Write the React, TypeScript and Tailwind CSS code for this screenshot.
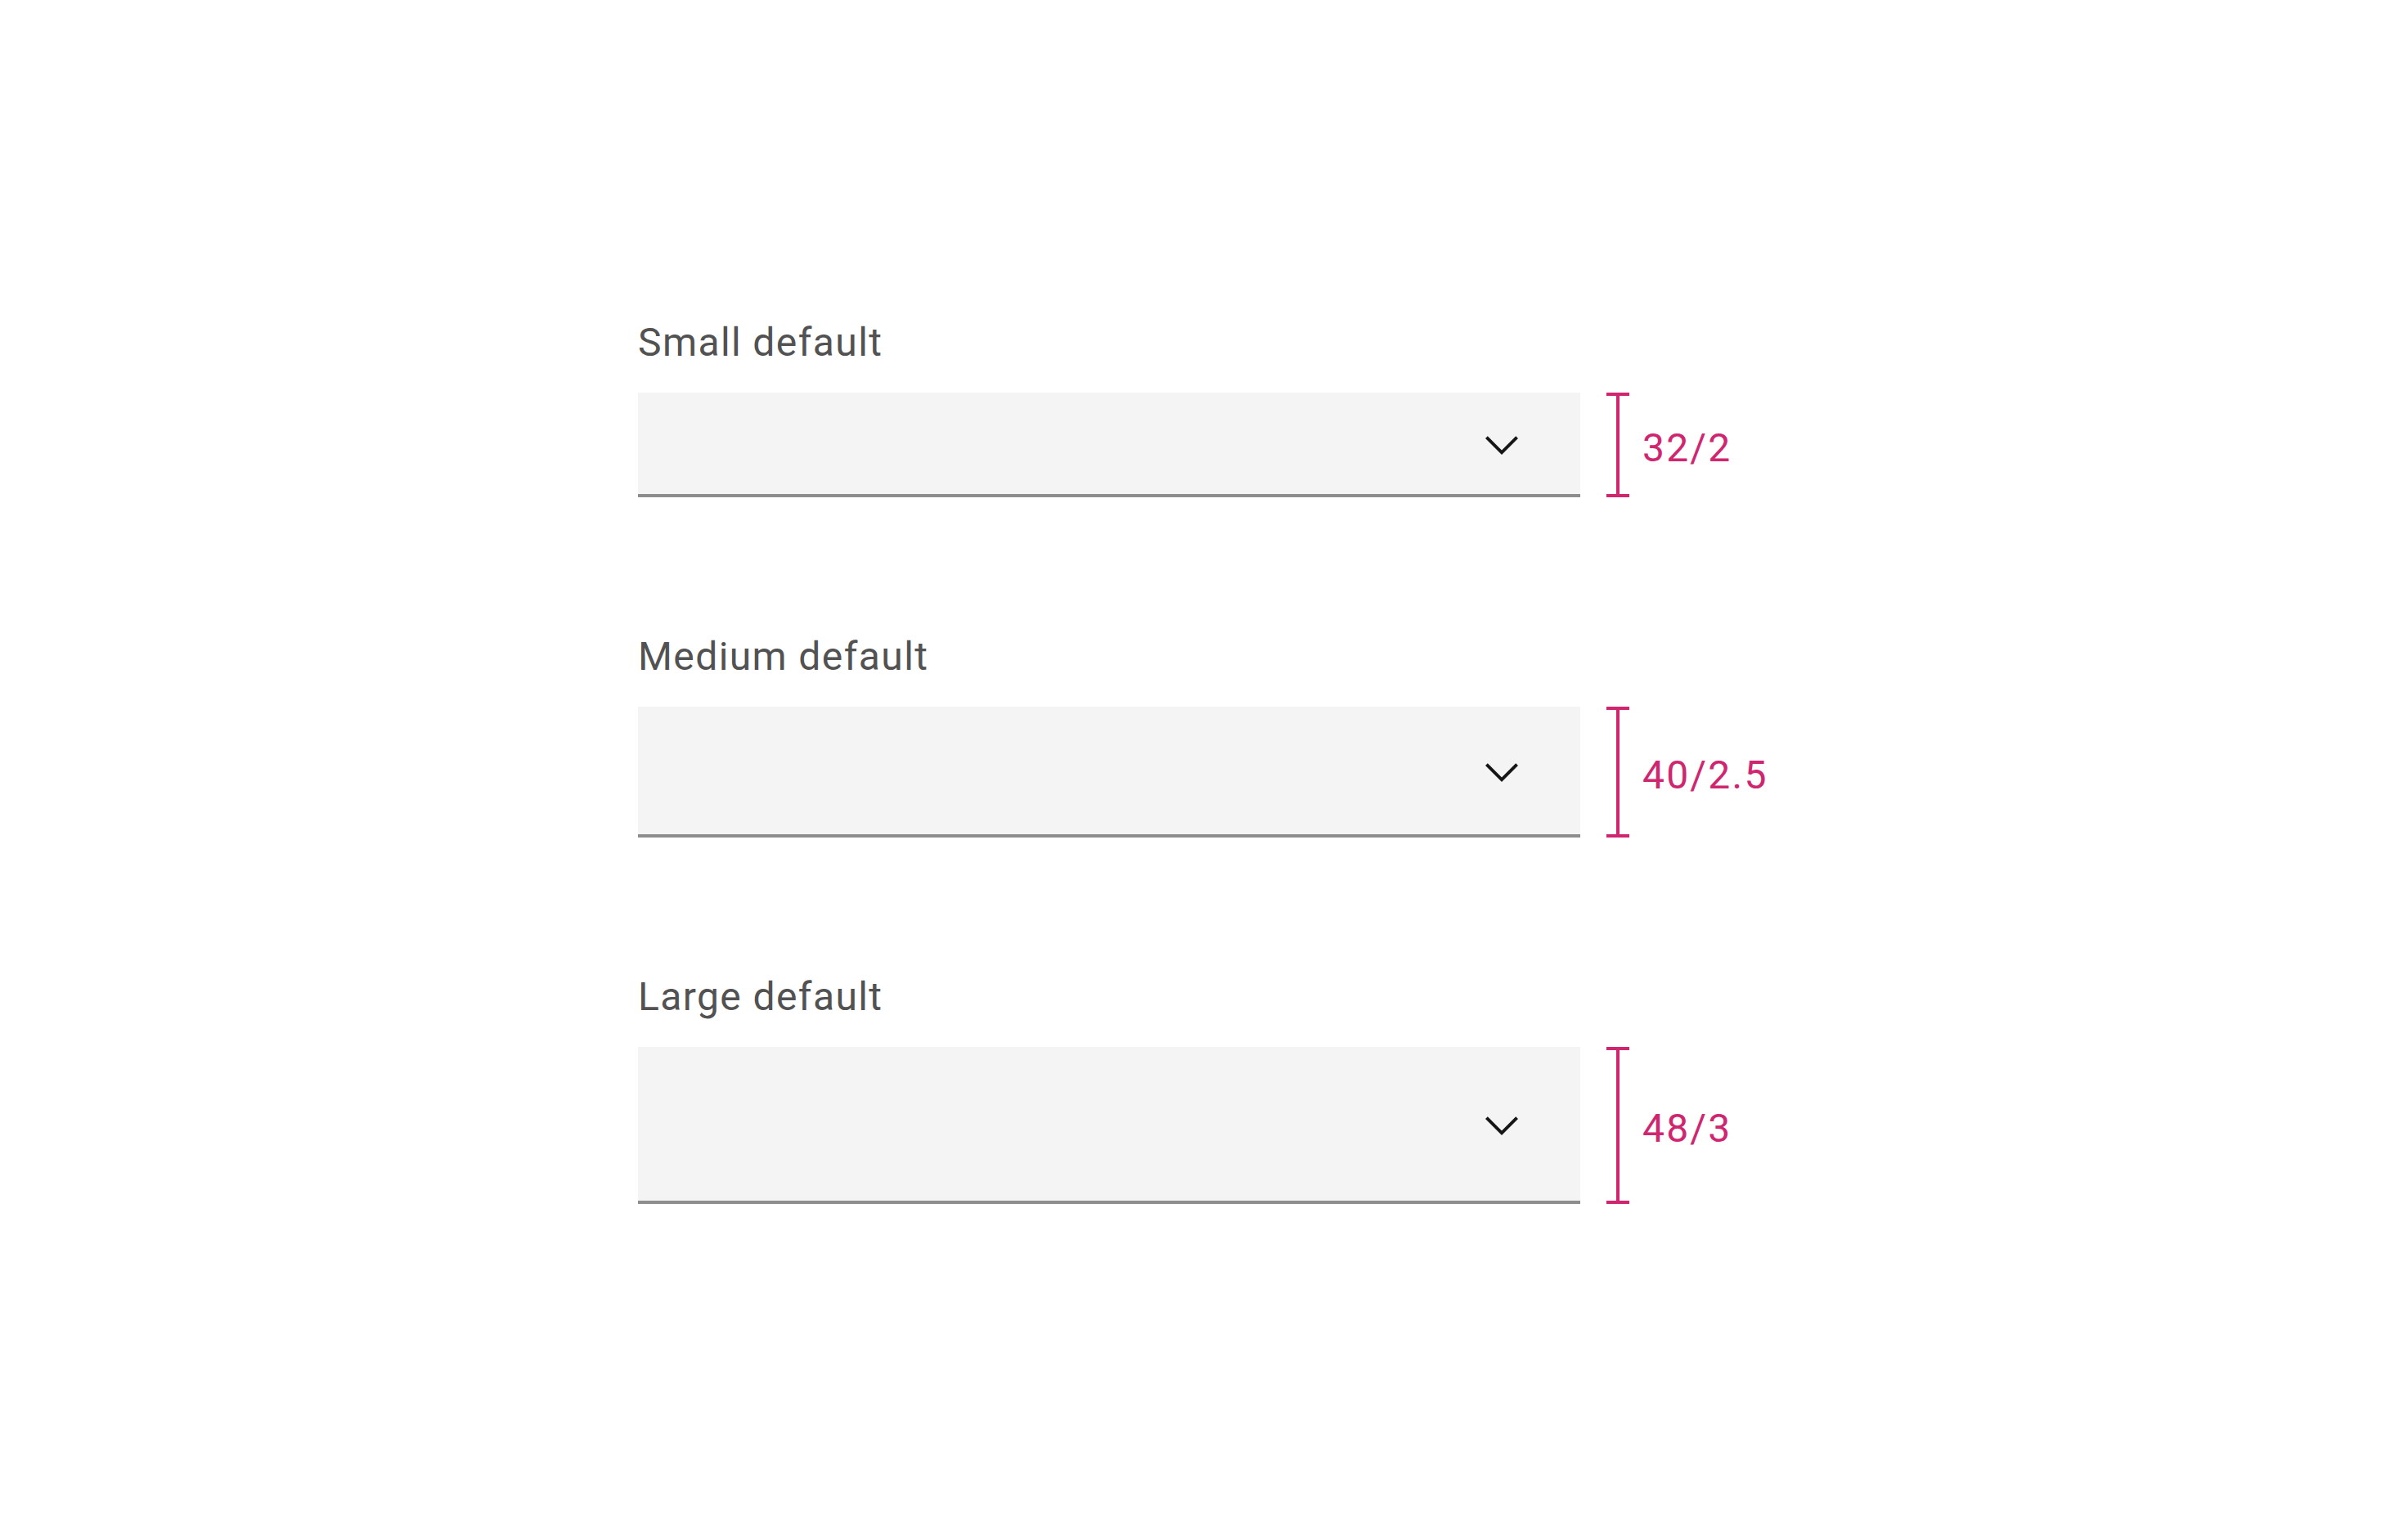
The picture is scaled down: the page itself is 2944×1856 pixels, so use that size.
import React from "react";

const Chevron = () => (
  <svg width="64" height="64" viewBox="0 0 16 16" fill="#161616" aria-hidden="true">
    <path d="M8 11L3 6 3.7 5.3 8 9.6 12.3 5.3 13 6z" />
  </svg>
);

type Row = { label: string; h: string; bracketH: string; measure: string };

const rows: Row[] = [
  { label: "Small default", h: "h-[128px]", bracketH: "h-[128px]", measure: "32/2" },
  { label: "Medium default", h: "h-[160px]", bracketH: "h-[160px]", measure: "40/2.5" },
  { label: "Large default", h: "h-[192px]", bracketH: "h-[192px]", measure: "48/3" },
];

const Bracket = ({ h }: { h: string }) => (
  <div className={`flex w-[28px] flex-col items-center ${h}`}>
    <div className="h-[4px] w-[28px] bg-[#d02670]" />
    <div className="w-[4px] flex-1 bg-[#d02670]" />
    <div className="h-[4px] w-[28px] bg-[#d02670]" />
  </div>
);

export default function App() {
  return (
    <div
      className="min-h-screen w-full bg-white pl-[780px] pt-[384px]"
      style={{ fontFamily: "Roboto, 'Noto Sans', sans-serif" }}
    >
      <div className="flex flex-col gap-[160px]">
        {rows.map((r) => (
          <div key={r.label} className="flex flex-col">
            <div className="mb-[32px] h-[64px] whitespace-nowrap pt-[3px] text-[48px] leading-[64px] tracking-[1.4px] text-[#525252]">
              {r.label}
            </div>
            <div className="flex items-center">
              <div
                className={`box-border flex w-[1152px] items-center justify-end border-b-4 border-[#8d8d8d] bg-[#f4f4f4] pr-[64px] pt-[3px] ${r.h}`}
              >
                <Chevron />
              </div>
              <div className="ml-[32px]">
                <Bracket h={r.bracketH} />
              </div>
              <div className="ml-[16px] whitespace-nowrap pt-[8px] text-[48px] leading-[64px] tracking-[2.2px] text-[#d02670]">
                {r.measure}
              </div>
            </div>
          </div>
        ))}
      </div>
    </div>
  );
}
